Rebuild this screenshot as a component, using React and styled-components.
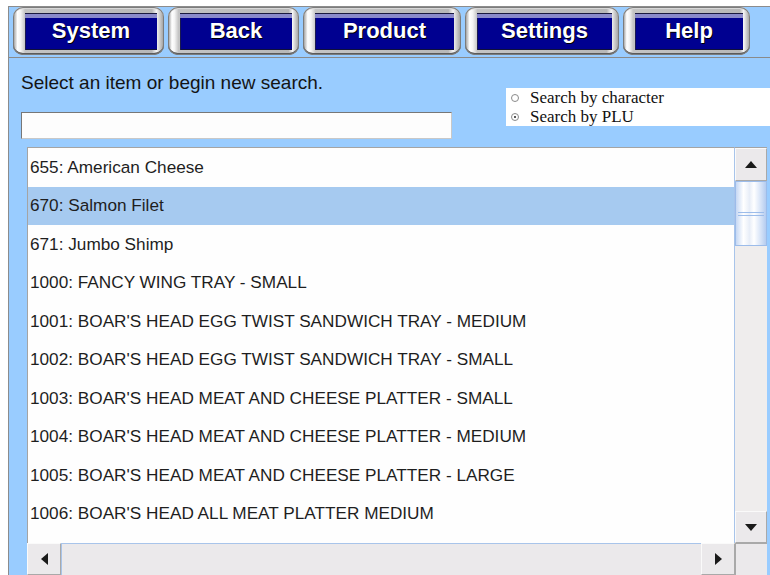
import { useState } from "react";
import styled, { createGlobalStyle } from "styled-components";

const GlobalStyle = createGlobalStyle`
  html, body {
    margin: 0;
    padding: 0;
    background: #ffffff;
    overflow: hidden;
  }
  body {
    font-family: "Liberation Sans", Arial, sans-serif;
  }
`;

const Page = styled.div`
  width: 770px;
  height: 575px;
  padding: 6px 0 0 8px;
  box-sizing: border-box;
  overflow: hidden;
`;

const Frame = styled.div`
  height: 569px;
  background: #99ccff;
  border-top: 1px solid #8c8c8c;
  border-left: 1px solid #8c8c8c;
  display: flex;
  flex-direction: column;
`;

const MenuBar = styled.div`
  height: 50px;
  display: flex;
  align-items: flex-start;
  gap: 4px;
  padding-left: 4px;
  border-bottom: 1px solid #8a8a8a;
`;

const MenuButton = styled.button`
  width: ${({ $w }) => $w}px;
  height: 48px;
  padding: 6px 7px 5px 12px;
  border: none;
  border-radius: 10px;
  box-sizing: border-box;
  display: flex;
  cursor: pointer;
  background: linear-gradient(
    90deg,
    #8e8e8e 0%,
    #ffffff 3%,
    #f4f4f4 5%,
    #c4c4c4 8%,
    #b8b8b8 92%,
    #f6f6f6 95%,
    #9a9a9a 100%
  );
  box-shadow: inset 0 0 0 1px #7c7c7c, inset 0 -2px 0 #5a5a5a,
    inset 0 2px 0 #d8d8d8;
`;

const MenuFace = styled.span`
  flex: 1;
  display: flex;
  align-items: center;
  justify-content: center;
  background: #000090;
  border-top: 1px solid #1a1a40;
  box-shadow: inset 0 4px 0 #8a8acb, inset 1px 0 0 #1a1a50,
    inset 0 -1px 0 #10103a;
  color: #ffffff;
  font-family: "Liberation Sans", Arial, sans-serif;
  font-weight: bold;
  font-size: 22px;
  padding-bottom: 3px;
  text-shadow: 1px 1px 0 #000000;
`;

const Content = styled.div`
  flex: 1;
  display: flex;
  flex-direction: column;
  padding-top: 14px;
  min-height: 0;
`;

const TopRow = styled.div`
  display: flex;
  align-items: flex-start;
  justify-content: space-between;
  padding-left: 12px;
`;

const SearchColumn = styled.div`
  display: flex;
  flex-direction: column;
`;

const Prompt = styled.div`
  font-size: 19px;
  line-height: 22px;
  color: #141414;
`;

const SearchInput = styled.input`
  margin-top: 18px;
  width: 431px;
  height: 27px;
  box-sizing: border-box;
  border: 1px solid;
  border-color: #777777 #c8c8c8 #c8c8c8 #777777;
  background: #fdfdfd;
  outline: none;
  font-family: "Liberation Sans", Arial, sans-serif;
  font-size: 16px;
  padding: 0 4px;
`;

const ModePanel = styled.div`
  margin-top: 16px;
  width: 264px;
  height: 38px;
  background: #ffffff;
  padding: 0 0 0 5px;
  box-sizing: border-box;
  display: flex;
  flex-direction: column;
  justify-content: center;
`;

const ModeOption = styled.label`
  display: flex;
  align-items: center;
  gap: 11px;
  font-family: "Liberation Serif", "Times New Roman", serif;
  font-size: 17px;
  line-height: 19px;
  color: #111111;
`;

const RadioDot = styled.span`
  width: 8px;
  height: 8px;
  border-radius: 50%;
  border: 1px solid #8a8a8a;
  box-sizing: border-box;
  display: flex;
  align-items: center;
  justify-content: center;
  background: #ffffff;

  &::after {
    content: "";
    width: 2px;
    height: 2px;
    border-radius: 50%;
    background: ${({ $on }) => ($on ? "#222222" : "transparent")};
  }
`;

const ListBox = styled.div`
  margin: 8px 3px 0 18px;
  flex: 1;
  display: grid;
  grid-template-columns: 1fr 32px;
  grid-template-rows: 396px 32px;
  min-height: 0;
`;

const Rows = styled.div`
  background: #fefefe;
  border-top: 1px solid #a4a4a4;
  border-left: 1px solid #a4a4a4;
  border-right: 1px solid #a8c4ea;
  overflow: hidden;
`;

const Row = styled.div`
  height: 38.5px;
  display: flex;
  align-items: center;
  padding-left: 2px;
  font-size: 17.2px;
  color: #1e1e1e;
  white-space: nowrap;
  background: ${({ $active }) => ($active ? "#a6caf0" : "transparent")};
`;

const VScroll = styled.div`
  display: flex;
  flex-direction: column;
  background: #efeded;
  border-top: 1px solid #a4a4a4;
`;

const ArrowButton = styled.div`
  width: ${({ $w }) => ($w ? `${$w}px` : "auto")};
  height: ${({ $h }) => ($h ? `${$h}px` : "auto")};
  flex-shrink: 0;
  display: flex;
  align-items: center;
  justify-content: center;
  background: #ebe9eb;
  box-sizing: border-box;
  border: 1px solid;
  border-color: #fafafa #a9a9a9 #a9a9a9 #fafafa;
`;

const VThumb = styled.div`
  height: 65px;
  flex-shrink: 0;
  box-sizing: border-box;
  border: 1px solid #9cbcea;
  background: linear-gradient(
    90deg,
    #c6d8f4 0%,
    #ffffff 25%,
    #e8eef8 45%,
    #ffffff 60%,
    #d2e0f6 85%,
    #b4ccf0 100%
  );
  display: flex;
  align-items: center;
  justify-content: center;
`;

const Grip = styled.div`
  width: 26px;
  height: 4px;
  border-top: 1px solid #9cbcea;
  border-bottom: 1px solid #9cbcea;
  box-sizing: border-box;
`;

const Track = styled.div`
  flex: 1;
`;

const HScroll = styled.div`
  display: flex;
  background: #efeded;
`;

const HThumb = styled.div`
  flex: 1;
  background: #ebe9eb;
  border-top: 1px solid #a8c4ea;
  border-left: 1px solid #a8c4ea;
`;

const Corner = styled.div`
  background: #ebe9eb;
  border-left: 1px solid #a9a9a9;
  border-top: 1px solid #a9a9a9;
`;

const Arrow = ({ dir }) => {
  const shapes = {
    up: "0,7 12,7 6,0",
    down: "0,0 12,0 6,7",
    left: "7,0 7,12 0,6",
    right: "0,0 0,12 7,6",
  };
  const vertical = dir === "up" || dir === "down";
  return (
    <svg width={vertical ? 12 : 7} height={vertical ? 7 : 12}>
      <polygon points={shapes[dir]} fill="#1a1a1a" />
    </svg>
  );
};

const menu = [
  { label: "System", width: 151 },
  { label: "Back", width: 131 },
  { label: "Product", width: 158 },
  { label: "Settings", width: 154 },
  { label: "Help", width: 127 },
];

const items = [
  { plu: 655, name: "American Cheese" },
  { plu: 670, name: "Salmon Filet" },
  { plu: 671, name: "Jumbo Shimp" },
  { plu: 1000, name: "FANCY WING TRAY - SMALL" },
  { plu: 1001, name: "BOAR'S HEAD EGG TWIST SANDWICH TRAY - MEDIUM" },
  { plu: 1002, name: "BOAR'S HEAD EGG TWIST SANDWICH TRAY - SMALL" },
  { plu: 1003, name: "BOAR'S HEAD MEAT AND CHEESE PLATTER - SMALL" },
  { plu: 1004, name: "BOAR'S HEAD MEAT AND CHEESE PLATTER - MEDIUM" },
  { plu: 1005, name: "BOAR'S HEAD MEAT AND CHEESE PLATTER - LARGE" },
  { plu: 1006, name: "BOAR'S HEAD ALL MEAT PLATTER MEDIUM" },
];

export default function App() {
  const [selected, setSelected] = useState(670);
  const [mode, setMode] = useState("plu");

  return (
    <>
      <GlobalStyle />
      <Page>
        <Frame>
          <MenuBar>
            {menu.map((m) => (
              <MenuButton key={m.label} $w={m.width}>
                <MenuFace>{m.label}</MenuFace>
              </MenuButton>
            ))}
          </MenuBar>

          <Content>
            <TopRow>
              <SearchColumn>
                <Prompt>Select an item or begin new search.</Prompt>
                <SearchInput type="text" />
              </SearchColumn>
              <ModePanel>
                <ModeOption onClick={() => setMode("char")}>
                  <RadioDot $on={mode === "char"} />
                  Search by character
                </ModeOption>
                <ModeOption onClick={() => setMode("plu")}>
                  <RadioDot $on={mode === "plu"} />
                  Search by PLU
                </ModeOption>
              </ModePanel>
            </TopRow>

            <ListBox>
              <Rows>
                {items.map((it) => (
                  <Row
                    key={it.plu}
                    $active={it.plu === selected}
                    onClick={() => setSelected(it.plu)}
                  >
                    {it.plu}: {it.name}
                  </Row>
                ))}
              </Rows>
              <VScroll>
                <ArrowButton $h={33}>
                  <Arrow dir="up" />
                </ArrowButton>
                <VThumb>
                  <Grip />
                </VThumb>
                <Track />
                <ArrowButton $h={32}>
                  <Arrow dir="down" />
                </ArrowButton>
              </VScroll>
              <HScroll>
                <ArrowButton $w={34}>
                  <Arrow dir="left" />
                </ArrowButton>
                <HThumb />
                <ArrowButton $w={34}>
                  <Arrow dir="right" />
                </ArrowButton>
              </HScroll>
              <Corner />
            </ListBox>
          </Content>
        </Frame>
      </Page>
    </>
  );
}
